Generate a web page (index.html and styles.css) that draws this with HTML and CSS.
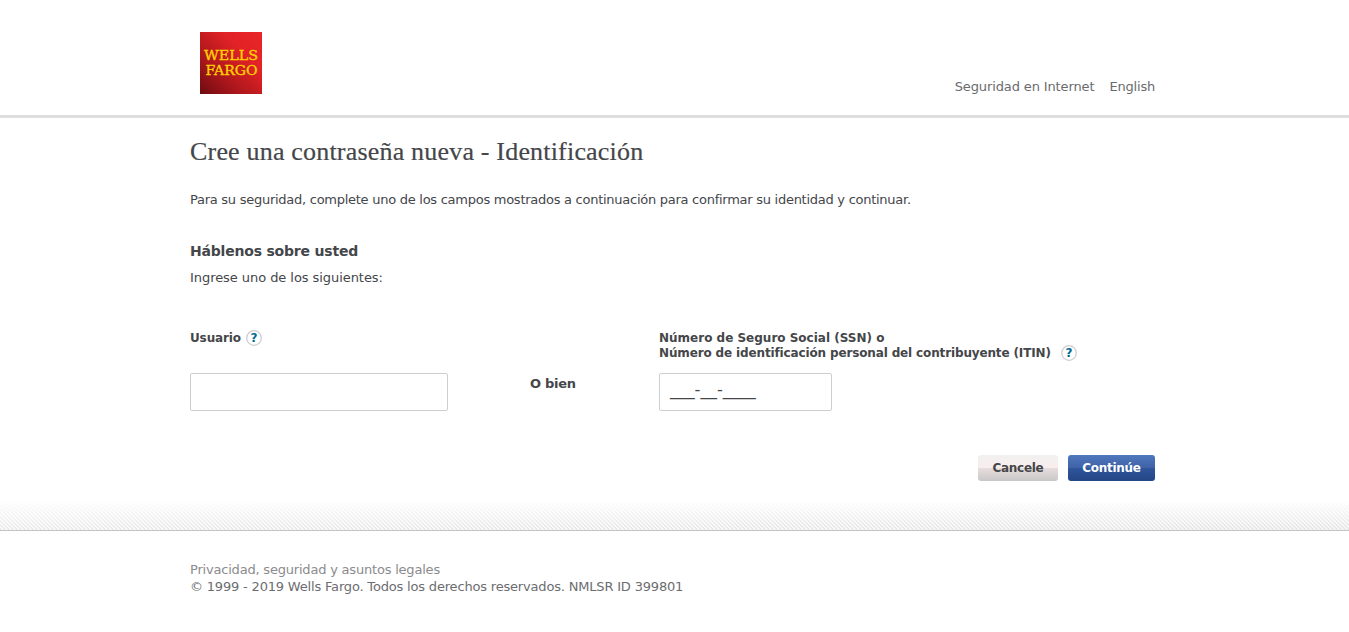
FILE: index.html
```html
<!DOCTYPE html>
<html lang="es">
<head>
<meta charset="utf-8">
<title>Cree una contraseña nueva - Identificación</title>
<link rel="stylesheet" href="styles.css">
</head>
<body>
<header class="masthead">
  <div class="wrap masthead-row">
    <svg class="logo" viewBox="0 0 62 62" role="img" aria-label="Wells Fargo">
      <defs>
        <linearGradient id="red" x1="0" y1="1" x2="1" y2="0">
          <stop offset="0" stop-color="#6d0c10"/>
          <stop offset=".3" stop-color="#a8161b"/>
          <stop offset=".68" stop-color="#e12226"/>
          <stop offset="1" stop-color="#e9262a"/>
        </linearGradient>
      </defs>
      <rect width="62" height="62" fill="url(#red)"/>
      <text class="logo-text" x="4" y="27.5" textLength="54" lengthAdjust="spacingAndGlyphs">WELLS</text>
      <text class="logo-text" x="5.5" y="43" textLength="52" lengthAdjust="spacingAndGlyphs">FARGO</text>
    </svg>
    <nav class="links"><a class="link-security">Seguridad en Internet</a><a class="link-english">English</a></nav>
  </div>
</header>
<main class="wrap">
  <h1 class="title">Cree una contraseña nueva - Identificación</h1>
  <p class="intro">Para su seguridad, complete uno de los campos mostrados a continuación para confirmar su identidad y continuar.</p>
  <h2 class="subtitle">Háblenos sobre usted</h2>
  <p class="hint">Ingrese uno de los siguientes:</p>
  <div class="fields">
    <div class="field user">
      <div class="label"><span class="label-text">Usuario</span>
        <svg class="help" viewBox="0 0 16 16"><circle cx="8" cy="8" r="7.3"/><text x="8" y="12.2">?</text></svg>
      </div>
      <div class="box"></div>
    </div>
    <div class="or">O bien</div>
    <div class="field ssn">
      <div class="label"><span class="label-text">Número de Seguro Social (SSN) o<br><span class="label-itin">Número de identificación personal del contribuyente (ITIN)</span></span>
        <svg class="help help-ssn" viewBox="0 0 16 16"><circle cx="8" cy="8" r="7.3"/><text x="8" y="12.2">?</text></svg>
      </div>
      <div class="box box-ssn">___-__-____</div>
    </div>
  </div>
  <div class="actions">
    <button class="btn cancel" type="button">Cancele</button>
    <button class="btn continue" type="button">Continúe</button>
  </div>
</main>
<div class="texture"></div>
<footer class="wrap footer">
  <div class="privacy">Privacidad, seguridad y asuntos legales</div>
  <div class="copyright">© 1999 - 2019 Wells Fargo. Todos los derechos reservados. NMLSR ID 399801</div>
</footer>
</body>
</html>
```
FILE: styles.css
```css
* { box-sizing: border-box; }
body {
  margin: 0;
  background: #fff;
  color: #44464a;
  font: 13px/17px Verdana, "DejaVu Sans", sans-serif;
  overflow: hidden;
}
.wrap { width: 965px; margin: 0 0 0 190px; }
.masthead { height: 118px; border-bottom: 3px solid #dedede; }
.masthead-row { display: flex; justify-content: space-between; padding: 32px 0 0 10px; }
.logo { display: block; width: 62px; height: 62px; }
.logo-text {
  font: 13px "DejaVu Serif", serif;
  fill: #ffd200;
  stroke: #ffd200;
  stroke-width: .35px;
}
.links { display: flex; gap: 15px; padding-top: 46px; color: #6a6b6e; white-space: nowrap; }
.link-security { letter-spacing: -.12px; }
.link-english { letter-spacing: -.2px; }
.title {
  margin: 0;
  padding-top: 18px;
  font: normal 26px/32px Georgia, "Liberation Serif", serif;
  letter-spacing: .19px;
  -webkit-text-stroke: .2px #44464a;
  white-space: nowrap;
}
.intro { margin: 23px 0 0; letter-spacing: -.264px; white-space: nowrap; }
.subtitle { margin: 33px 0 0; font-size: 14px; line-height: 20px; letter-spacing: -.2px; }
.hint { margin: 8px 0 0; letter-spacing: -.06px; }
.fields { display: flex; margin-top: 44px; }
.field { display: flex; flex-direction: column; }
.user { width: 340px; }
.or { width: 129px; padding-top: 45px; font-weight: bold; letter-spacing: -.28px; }
.label {
  display: flex;
  height: 43px;
  gap: 5px;
  font-weight: bold;
  font-size: 12px;
  line-height: 15px;
  white-space: nowrap;
}
.user .label { letter-spacing: -.13px; }
.label-text { padding-top: 1px; }
.label-itin { letter-spacing: -.14px; }
.help { flex: none; width: 16px; height: 16px; letter-spacing: 0; }
.help circle { fill: #fff; stroke: #cdcdd3; stroke-width: 1.3; }
.help text { fill: #006b91; font: bold 12px "DejaVu Sans", sans-serif; text-anchor: middle; }
.help-ssn { margin: 15px 0 0 5px; }
.box {
  width: 258px;
  height: 38px;
  border: 1px solid #ccced0;
  border-radius: 2px;
}
.box-ssn { width: 173px; padding: 7px 10px; font-size: 16.4px; }
.actions { display: flex; justify-content: flex-end; gap: 10px; margin-top: 44px; }
.btn {
  height: 26px;
  padding: 0;
  border: 0;
  border-radius: 3px;
  font: bold 12px/26px Verdana, "DejaVu Sans", sans-serif;
  letter-spacing: -.3px;
}
.cancel {
  width: 80px;
  color: #44464a;
  background: linear-gradient(#f1f0f1, #f9eded 50%, #e7dddd 51%, #c9c7c8);
}
.continue {
  width: 87px;
  color: #fff;
  background: linear-gradient(#5077bd, #3f62a8 50%, #2f559b 51%, #234685);
}
.texture {
  height: 31px;
  margin-top: 19px;
  margin-bottom: 30px;
  border-bottom: 1px solid #c4c4c4;
  background:
    linear-gradient(#fff, rgba(255, 255, 255, 0) 95%),
    repeating-linear-gradient(45deg, #e6e6e6 0 1.1px, #fafafa 1.8px 2.83px);
}
.footer { color: #6c6d70; white-space: nowrap; }
.privacy { color: #8b8b8d; letter-spacing: -.2px; }
.copyright { letter-spacing: -.18px; }
```
